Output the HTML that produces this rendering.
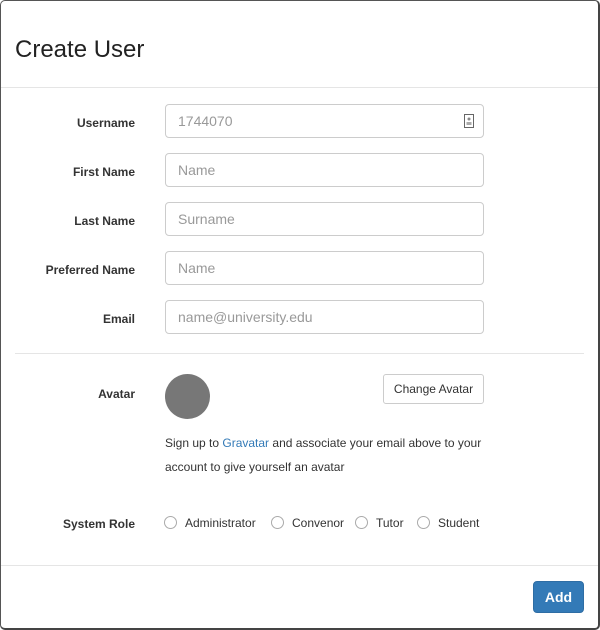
<!DOCTYPE html>
<html><head><style>
*{box-sizing:border-box;margin:0;padding:0}
body{width:600px;height:630px;background:#fff;font-family:"Liberation Sans",sans-serif;color:#333;position:relative;overflow:hidden}
.frame{position:absolute;left:0;top:0;width:600px;height:630px;border:1px solid #555;border-right:2px solid #444;border-bottom:2px solid #444;border-radius:5px}
h1{position:absolute;left:15px;top:36px;font-size:24px;font-weight:normal;color:#222}
.hr{position:absolute;height:1px;background:#e5e5e5}
.lbl{position:absolute;right:465px;font-size:12px;font-weight:bold;color:#333;text-align:right}
.inp{position:absolute;left:165px;width:319px;height:34px;border:1px solid #ccc;border-radius:4px;font-size:14px;color:#999;padding:8px 12px;line-height:17px}
.btn{position:absolute;border:1px solid #ccc;border-radius:3px;font-size:12px;color:#333;text-align:center}
.radio{position:absolute;top:516px;width:13px;height:13px;border:1px solid #aaa;border-radius:50%}
.rt{position:absolute;top:516px;font-size:12px;color:#333}
</style></head><body>
<div class="frame"></div>
<h1>Create User</h1>
<div class="hr" style="left:1px;right:2px;top:87px"></div>
<div class="lbl" style="top:116px">Username</div>
<div class="inp" style="top:104px">1744070<svg style="position:absolute;right:9px;top:9px" width="10" height="14" viewBox="0 0 10 14"><rect x="0.5" y="0.5" width="9" height="13" fill="none" stroke="#666"/><circle cx="5" cy="5" r="1.5" fill="#888"/><rect x="2.5" y="8" width="5" height="3" fill="#aaa"/></svg></div>
<div class="lbl" style="top:165px">First Name</div>
<div class="inp" style="top:153px">Name</div>
<div class="lbl" style="top:214px">Last Name</div>
<div class="inp" style="top:202px">Surname</div>
<div class="lbl" style="top:263px">Preferred Name</div>
<div class="inp" style="top:251px">Name</div>
<div class="lbl" style="top:312px">Email</div>
<div class="inp" style="top:300px">name@university.edu</div>
<div class="hr" style="left:15px;width:569px;top:353px"></div>
<div class="lbl" style="top:387px">Avatar</div>
<div style="position:absolute;left:165px;top:374px;width:45px;height:45px;border-radius:50%;background:#777"></div>
<div class="btn" style="left:383px;top:374px;width:101px;height:30px;line-height:28px">Change Avatar</div>
<div style="position:absolute;left:165px;top:431px;font-size:12px;line-height:24px;color:#333;width:330px">Sign up to <span style="color:#337ab7">Gravatar</span> and associate your email above to your account to give yourself an avatar</div>
<div class="lbl" style="top:517px">System Role</div>
<div class="radio" style="left:164px"></div><div class="rt" style="left:185px">Administrator</div>
<div class="radio" style="left:271px"></div><div class="rt" style="left:292px">Convenor</div>
<div class="radio" style="left:355px"></div><div class="rt" style="left:376px">Tutor</div>
<div class="radio" style="left:417px"></div><div class="rt" style="left:438px">Student</div>
<div class="hr" style="left:1px;right:2px;top:565px"></div>
<div style="position:absolute;left:533px;top:581px;width:51px;height:32px;background:#337ab7;border:1px solid #2e6da4;border-radius:4px;color:#fff;font-weight:bold;font-size:14px;text-align:center;line-height:30px">Add</div>
</body></html>
